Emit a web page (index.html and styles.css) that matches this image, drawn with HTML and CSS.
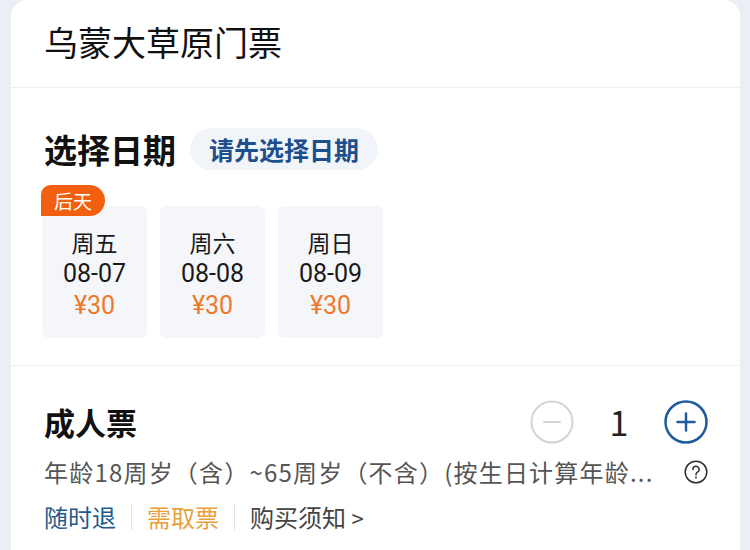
FILE: index.html
```html
<!DOCTYPE html>
<html lang="zh-CN">
<head>
    <meta charset="UTF-8">
    <meta name="viewport" content="width=device-width, initial-scale=1.0">
    <title>乌蒙大草原门票</title>
    <link rel="stylesheet" href="styles.css">
</head>
<body>
    <div class="ticket-card">
        <div class="ticket-header">
            <h1>乌蒙大草原门票</h1>
        </div>

        <div class="date-section">
            <div class="date-title">
                <h2>选择日期</h2>
                <span class="date-hint">请先选择日期</span>
            </div>
            <div class="date-list">
                <div class="date-item">
                    <span class="date-badge">后天</span>
                    <div class="date-week">周五</div>
                    <div class="date-day">08-07</div>
                    <div class="date-price">¥30</div>
                </div>
                <div class="date-item">
                    <div class="date-week">周六</div>
                    <div class="date-day">08-08</div>
                    <div class="date-price">¥30</div>
                </div>
                <div class="date-item">
                    <div class="date-week">周日</div>
                    <div class="date-day">08-09</div>
                    <div class="date-price">¥30</div>
                </div>
            </div>
        </div>

        <div class="ticket-section">
            <div class="ticket-row">
                <h2>成人票</h2>
                <div class="stepper">
                    <svg class="step-btn" width="44" height="44" viewBox="0 0 44 44">
                        <circle cx="22" cy="22" r="20.5" fill="none" stroke="#d4d4d4" stroke-width="2"/>
                        <line x1="14" y1="22" x2="30" y2="22" stroke="#d4d4d4" stroke-width="2" stroke-linecap="round"/>
                    </svg>
                    <span class="step-num">1</span>
                    <svg class="step-btn" width="44" height="44" viewBox="0 0 44 44">
                        <circle cx="22" cy="22" r="20.5" fill="none" stroke="#1f5b9d" stroke-width="2.5"/>
                        <line x1="13.5" y1="22" x2="30.5" y2="22" stroke="#1f5b9d" stroke-width="2.5" stroke-linecap="round"/>
                        <line x1="22" y1="13.5" x2="22" y2="30.5" stroke="#1f5b9d" stroke-width="2.5" stroke-linecap="round"/>
                    </svg>
                </div>
            </div>
            <div class="age-row">
                <span class="age-text">年龄18周岁（含）~65周岁（不含）(按生日计算年龄...</span>
                <svg class="help-icon" width="24" height="24" viewBox="0 0 24 24">
                    <circle cx="12" cy="12" r="10.8" fill="none" stroke="#333" stroke-width="1.5"/>
                    <path d="M8.9 9.4a3.1 3.1 0 1 1 4.6 2.7c-1 .6-1.5 1.2-1.5 2.3v.6" fill="none" stroke="#333" stroke-width="1.5" stroke-linecap="round"/>
                    <circle cx="12" cy="17.6" r="1" fill="#333"/>
                </svg>
            </div>
            <div class="tag-row">
                <span class="tag tag-blue">随时退</span>
                <span class="tag-sep"></span>
                <span class="tag tag-orange">需取票</span>
                <span class="tag-sep"></span>
                <span class="tag tag-link">购买须知 <span class="arrow">&gt;</span></span>
            </div>
        </div>
    </div>
</body>
</html>
```

FILE: styles.css
```css
body {
    margin: 0;
    background-color: #eceef5;
    font-family: "Noto Sans CJK SC", "Noto Sans", sans-serif;
    color: #111;
}
h1, h2 {
    margin: 0;
}
.ticket-card {
    margin: 0 10px 0 11px;
    min-height: 550px;
    background-color: #fff;
    border-radius: 16px 16px 0 0;
}
.ticket-header {
    height: 88px;
    padding: 0 33px;
    border-bottom: 1px solid #efeff1;
    box-sizing: border-box;
}
.ticket-header h1 {
    padding-top: 21px;
    font-size: 34px;
    font-weight: 400;
    line-height: 42px;
}
.date-section {
    padding: 40px 33px 27px;
    border-bottom: 1px solid #eeeff2;
}
.date-title {
    display: flex;
    align-items: center;
    gap: 14px;
}
.date-title h2 {
    font-size: 33px;
    font-weight: 700;
    line-height: 42px;
}
.date-hint {
    height: 42px;
    padding: 0 19px;
    border-radius: 21px;
    background-color: #f1f4f9;
    color: #1c4f8c;
    font-size: 25px;
    font-weight: 700;
    line-height: 42px;
}
.date-list {
    display: flex;
    gap: 13px;
    margin: 36px 0 0 -2px;
}
.date-item {
    position: relative;
    width: 105px;
    height: 132px;
    padding-top: 21px;
    border-radius: 7px;
    background-color: #f4f6fa;
    text-align: center;
    box-sizing: border-box;
}
.date-badge {
    position: absolute;
    top: -21px;
    left: -1px;
    width: 64px;
    height: 31px;
    border-radius: 10px 16px 16px 0;
    background-color: #f25f0f;
    color: #fff;
    font-size: 19px;
    line-height: 31px;
}
.date-week {
    color: #1a1a1a;
    font-size: 23px;
    line-height: 31px;
}
.date-day,
.date-price {
    font-family: Roboto, "Noto Sans CJK SC", sans-serif;
    font-size: 25px;
    line-height: 32px;
}
.date-day {
    color: #1a1a1a;
}
.date-price {
    color: #ec7a2a;
}
.ticket-section {
    padding: 34px 32px 0 33px;
}
.ticket-row {
    display: flex;
    align-items: center;
    justify-content: space-between;
}
.ticket-row h2 {
    font-size: 31px;
    font-weight: 700;
    line-height: 44px;
}
.stepper {
    display: flex;
    align-items: center;
}
.step-btn {
    display: block;
}
.step-num {
    width: 90px;
    text-align: center;
    color: #222;
    font-size: 34px;
    line-height: 44px;
}
.age-row {
    display: flex;
    align-items: center;
    justify-content: space-between;
    margin-top: 13px;
    height: 30px;
}
.age-text {
    white-space: nowrap;
    color: #555;
    font-size: 24px;
    letter-spacing: 1.2px;
    line-height: 30px;
}
.help-icon {
    display: block;
    flex-shrink: 0;
}
.tag-row {
    display: flex;
    align-items: center;
    margin-top: 14px;
    height: 32px;
}
.tag {
    font-size: 24px;
    line-height: 32px;
}
.tag-blue {
    color: #1e5a8c;
}
.tag-orange {
    color: #e9a03c;
}
.tag-link {
    color: #444;
}
.arrow {
    font-size: 22px;
}
.tag-sep {
    width: 1px;
    height: 26px;
    margin: 0 15px;
    background-color: #e2e2e2;
}
```
